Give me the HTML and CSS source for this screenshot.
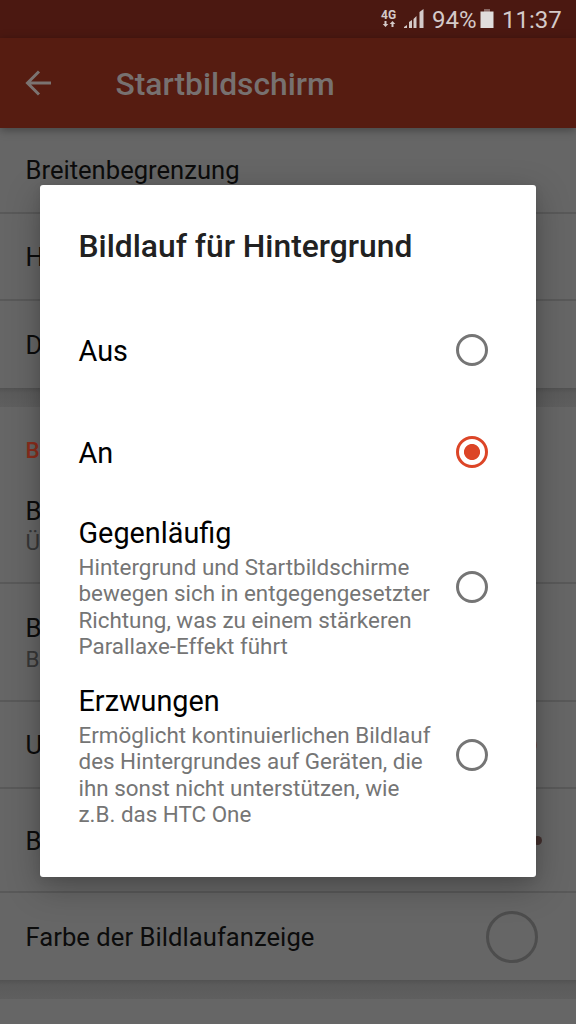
FILE: index.html
```html
<!DOCTYPE html>
<html lang="de">
<head>
<meta charset="utf-8">
<title>Startbildschirm</title>
<link rel="stylesheet" href="styles.css">
</head>
<body>
<div class="screen">
  <div class="status">
    <svg class="network" width="17" height="20" viewBox="0 0 17 20">
      <text class="network-label" x="0" y="9.500">4G</text>
      <path fill="#d4cac9" d="M3.500 12h2v3h1.800L4.500 18 1.700 15h1.800zM10.500 18v-3H8.700l2.800-3 2.800 3h-1.800v3z"/>
    </svg>
    <svg class="signal" width="20" height="20" viewBox="0 0 20 20">
      <path fill="#d4cac9" d="M0 19v-1l3-2v3zM5 19v-6l3-2v8zM9.500 19v-9l3-3v12zM15.500 19V3l4-3v19z"/>
    </svg>
    <span class="percent">94%</span>
    <svg class="battery" width="14" height="20" viewBox="0 0 14 20">
      <path fill="#886763" d="M4 0h6v3H4z"/>
      <path fill="#e0dddc" d="M0.500 2.500h13V19h-13z"/>
    </svg>
    <span class="clock">11:37</span>
  </div>
  <header class="toolbar">
    <svg class="back" width="26" height="26" viewBox="0 0 26 26" fill="none" stroke="#7b7371" stroke-width="3">
      <path d="M26 13H2.500M14 1.500 2.500 13 14 24.500"/>
    </svg>
    <h1 class="toolbar-title">Startbildschirm</h1>
  </header>
  <main class="settings">
    <section class="card card-first">
      <div class="row row-a"><span class="label label-width">Breitenbegrenzung</span></div>
      <div class="row row-b"><span class="label">H</span></div>
      <div class="row row-c"><span class="label">D</span></div>
    </section>
    <div class="gap"></div>
    <section class="card">
      <div class="row row-d">
        <span class="section-label">B</span>
        <span class="label">B</span>
        <span class="hint">Ü</span>
      </div>
      <div class="row row-e"><span class="label">B</span><span class="hint">B</span></div>
      <div class="row row-f"><span class="label">U</span><i class="switch-knob"></i></div>
      <div class="row row-g"><span class="label">B</span><i class="slider-knob"></i></div>
      <div class="row row-h"><span class="label label-color">Farbe der Bildlaufanzeige</span><i class="swatch"></i></div>
    </section>
    <div class="gap"></div>
  </main>
  <div class="dialog" role="dialog">
    <h2 class="dialog-title">Bildlauf für Hintergrund</h2>
    <div class="option option-short">
      <div class="option-text"><div class="option-name">Aus</div></div>
      <i class="radio"></i>
    </div>
    <div class="option option-short">
      <div class="option-text"><div class="option-name">An</div></div>
      <i class="radio radio-on"></i>
    </div>
    <div class="option option-long">
      <div class="option-text">
        <div class="option-name">Gegenläufig</div>
        <p class="description">Hintergrund und Startbildschirme<br>bewegen sich in entgegengesetzter<br>Richtung, was zu einem stärkeren<br>Parallaxe-Effekt führt</p>
      </div>
      <i class="radio"></i>
    </div>
    <div class="option option-long">
      <div class="option-text">
        <div class="option-name">Erzwungen</div>
        <p class="description">Ermöglicht kontinuierlichen Bildlauf<br>des Hintergrundes auf Geräten, die<br>ihn sonst nicht unterstützen, wie<br>z.B. das HTC One</p>
      </div>
      <i class="radio"></i>
    </div>
  </div>
</div>
</body>
</html>
```
FILE: styles.css
```css
* { box-sizing: border-box; }
body { margin: 0; font-family: Roboto, sans-serif; }
h1, h2, p { margin: 0; font-weight: 500; }
.screen { position: relative; width: 576px; height: 1024px; overflow: hidden; background: #666; }

.status { display: flex; align-items: flex-start; height: 38px; padding: 9px 0 0 381px; background: #4b1811; color: #d4cac9; }
.network { flex: none; overflow: visible; }
.network-label { font: 700 12px Roboto, sans-serif; fill: #d4cac9; }
.signal { flex: none; margin-left: 6px; }
.percent { width: 44px; margin-left: 8px; font-size: 24px; line-height: 22px; white-space: nowrap; }
.battery { flex: none; margin-left: 4px; }
.clock { margin-left: 8px; font-size: 24px; line-height: 22px; }

.toolbar { position: relative; display: flex; align-items: center; height: 90px; padding-left: 25px; background: #561c11; box-shadow: 0 2px 9px rgba(0, 0, 0, .35); }
.toolbar-title { margin: 2px 0 0 64.5px; font-size: 31.8px; line-height: 40px; color: #777170; }

.card { background: #666; }
.row { position: relative; display: flex; align-items: center; padding: 0 38px 0 25.5px; border-bottom: 2px solid #595959; }
.row:last-child { border-bottom: 0; }
.row-a { height: 86px; }
.row-b { height: 87px; padding-top: 1px; }
.row-c { height: 87px; }
.row-d { height: 177px; flex-direction: column; align-items: flex-start; padding-top: 28px; }
.row-e { height: 118px; flex-direction: column; align-items: flex-start; padding-top: 27px; }
.row-f { height: 87px; padding-top: 1px; justify-content: space-between; }
.row-g { height: 104px; padding-top: 1px; justify-content: space-between; }
.row-h { height: 87px; justify-content: space-between; }
.label { font-size: 25.6px; line-height: 34px; color: #0c0c0c; }
.label-color { letter-spacing: .04px; }
.section-label { margin-bottom: 28px; font-size: 22.4px; line-height: 31px; font-weight: 500; color: #8b2d1c; }
.hint { margin-top: -1px; font-size: 22.4px; line-height: 30px; color: #373737; }
.gap { height: 19px; background: linear-gradient(#525252, #5b5b5b 5px, #5f5f5f); }
.switch-knob { width: 14px; height: 14px; margin-right: 1px; border-radius: 50%; background: #684d49; }
.slider-knob { width: 9px; height: 9px; margin-right: -4px; border-radius: 50%; background: #422f2d; }
.swatch { width: 52px; height: 52px; border: 3px solid #4d4d4d; border-radius: 50%; }

.dialog { position: absolute; left: 40px; top: 185px; width: 496px; height: 692px; padding: 36px 48px 0 38.5px; border-radius: 3px; background: #fff; box-shadow: 0 10px 34px rgba(0, 0, 0, .28), 0 2px 8px rgba(0, 0, 0, .08); }
.dialog-title { margin-bottom: 40.5px; font-size: 31.8px; line-height: 50px; color: #212121; }
.option { display: flex; align-items: center; justify-content: space-between; }
.option-short { height: 102px; padding-bottom: 26px; }
.option-short .option-text { padding-top: 2px; }
.option-long { height: 168px; padding-bottom: 26px; }
.option-long .option-text { align-self: flex-start; }
.option-name { font-size: 28.8px; line-height: 36px; color: #000; }
.option-long .option-name { line-height: 35px; }
.description { margin-top: 3.5px; font-size: 22.4px; font-weight: 400; line-height: 26.4px; color: #757575; white-space: nowrap; }
.radio { flex: none; width: 32px; height: 32px; border: 3px solid #757575; border-radius: 50%; }
.radio-on { border-color: #dc4527; background: radial-gradient(circle, #dc4527 7.6px, #fff 8.4px); }
```
